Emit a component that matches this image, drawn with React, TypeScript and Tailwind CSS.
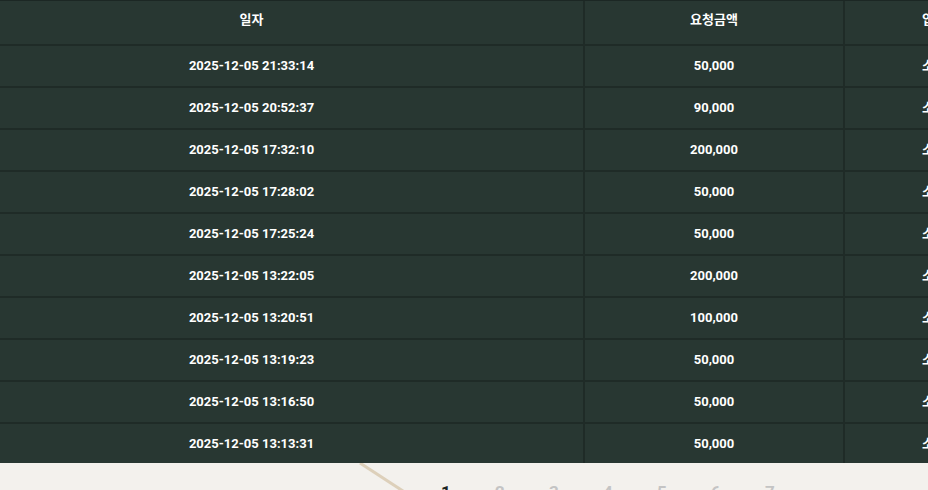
import React from "react";

const rows = [
  { date: "2025-12-05 21:33:14", amount: "50,000" },
  { date: "2025-12-05 20:52:37", amount: "90,000" },
  { date: "2025-12-05 17:32:10", amount: "200,000" },
  { date: "2025-12-05 17:28:02", amount: "50,000" },
  { date: "2025-12-05 17:25:24", amount: "50,000" },
  { date: "2025-12-05 13:22:05", amount: "200,000" },
  { date: "2025-12-05 13:20:51", amount: "100,000" },
  { date: "2025-12-05 13:19:23", amount: "50,000" },
  { date: "2025-12-05 13:16:50", amount: "50,000" },
  { date: "2025-12-05 13:13:31", amount: "50,000" },
];

const pages = [1, 2, 3, 4, 5, 6, 7];

export default function App() {
  return (
    <div
      className="w-[928px] h-[490px] overflow-hidden bg-[#f3f1ed]"
      style={{ fontFamily: '"Roboto", "Noto Sans CJK KR", sans-serif' }}
    >
      {/* 입금 내역 테이블 (가로 스크롤된 상태) */}
      <div className="w-[928px] overflow-hidden bg-[#283732] border-t border-[#1c2724]">
        <table className="-ml-[80px] w-[1115px] max-w-none border-collapse table-fixed text-[13px] font-bold text-white">
          <colgroup>
            <col className="w-[664px]" />
            <col className="w-[260px]" />
            <col className="w-[191px]" />
          </colgroup>
          <thead>
            <tr className="h-[44px]">
              <th className="pb-[5px] border-r-2 border-b-2 border-[#1f2b27] text-center font-bold">일자</th>
              <th className="pb-[5px] border-r-2 border-b-2 border-[#1f2b27] text-center font-bold">요청금액</th>
              <th className="pb-[5px] border-b-2 border-[#1f2b27] text-center font-bold">입금자</th>
            </tr>
          </thead>
          <tbody>
            {rows.map((r, i) => {
              const last = i === rows.length - 1;
              return (
                <tr key={i} className={last ? "h-[40px]" : "h-[42px]"}>
                  <td className={`border-r-2 border-[#1f2b27] text-center ${last ? "" : "border-b-2"}`}>
                    {r.date}
                  </td>
                  <td className={`border-r-2 border-[#1f2b27] text-center ${last ? "" : "border-b-2"}`}>
                    {r.amount}
                  </td>
                  <td className={`border-[#1f2b27] text-center ${last ? "" : "border-b-2"}`}>
                    소진우
                  </td>
                </tr>
              );
            })}
          </tbody>
        </table>
      </div>

      {/* 하단 페이지네이션 */}
      <div className="relative h-[60px]">
        <svg className="absolute left-0 top-0" width="928" height="40">
          <line x1="360" y1="0" x2="406" y2="30" stroke="#d8c8ae" strokeWidth="3" opacity="0.8" />
        </svg>
        <div className="relative flex gap-[40px] pl-[441px] pt-[17px] text-[17px] font-bold text-[#c4c4c4]">
          {pages.map((p) => (
            <span key={p} className={`w-[14px] ${p === 1 ? "text-[#1c2522]" : ""}`}>
              {p}
            </span>
          ))}
        </div>
      </div>
    </div>
  );
}
